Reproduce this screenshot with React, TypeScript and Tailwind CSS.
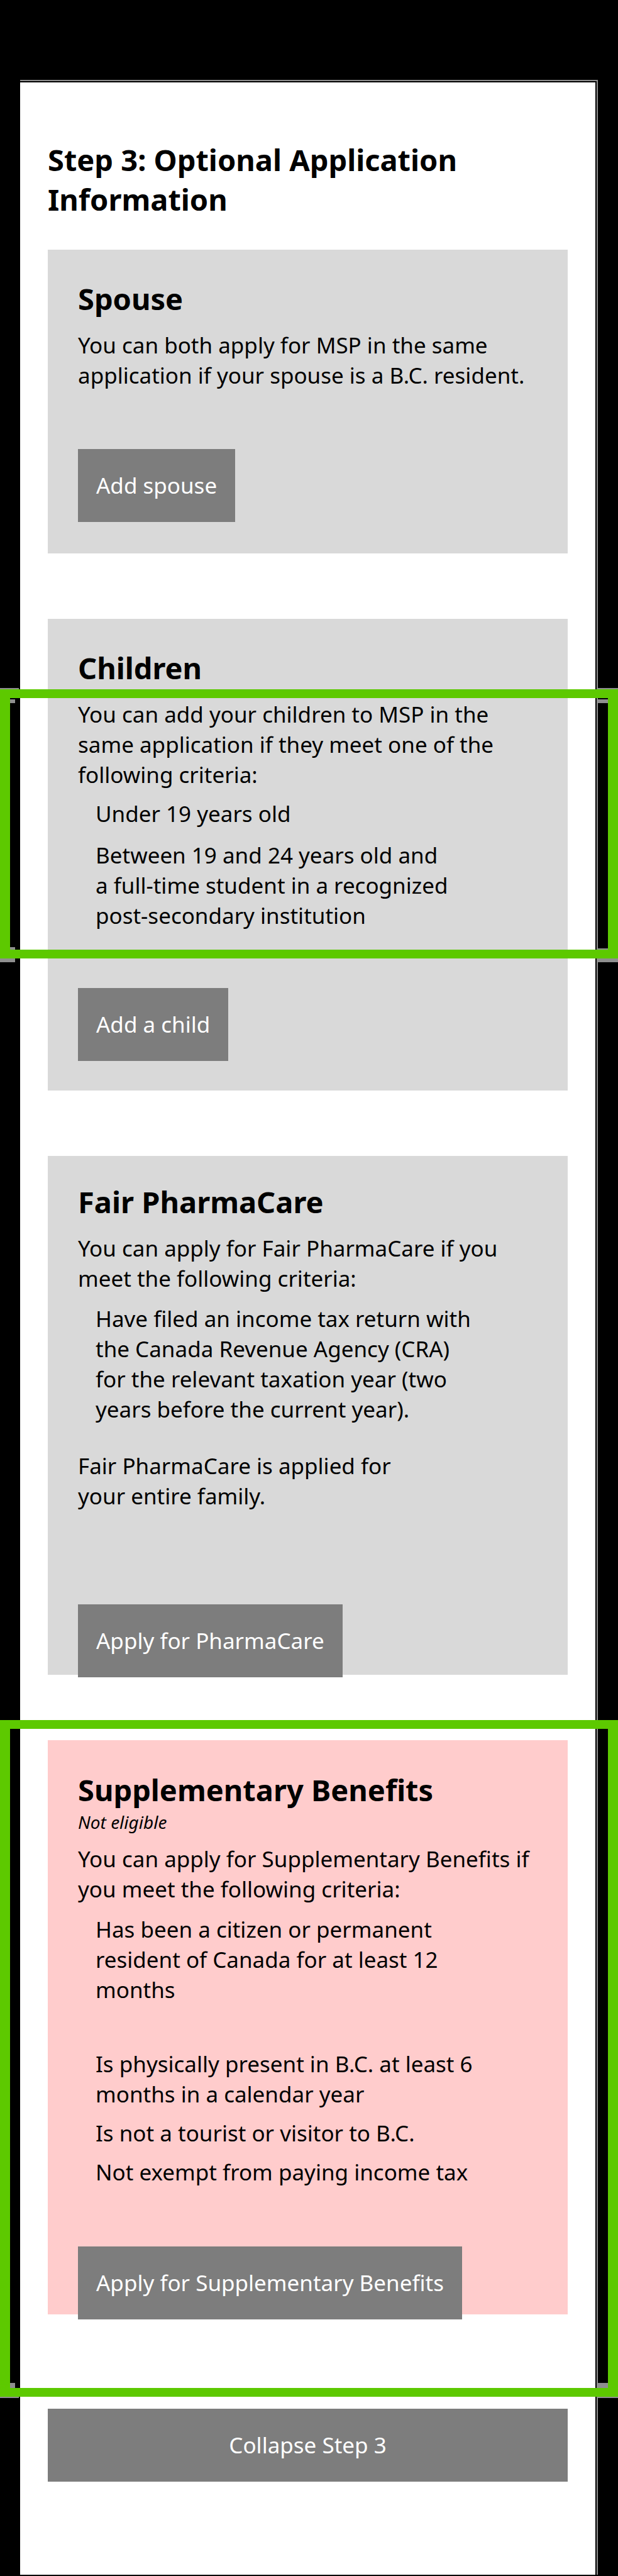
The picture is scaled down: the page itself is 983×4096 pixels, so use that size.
import React from "react";

function Title({ children }: { children: React.ReactNode }) {
  return <h2 className="text-[47px] leading-[63px] font-bold">{children}</h2>;
}

function Action({ children, className = "" }: { children: React.ReactNode; className?: string }) {
  return (
    <button type="button" className={`h-[116px] shrink-0 self-start bg-[#7d7d7d] px-[29px] text-white ${className}`}>
      {children}
    </button>
  );
}

function Highlight({ className = "", children }: { className?: string; children?: React.ReactNode }) {
  return (
    <div
      aria-hidden="true"
      className={`pointer-events-none absolute -left-[76px] -right-[80px] border-x-[16px] border-y-[14px] border-[#5dc900] ${className}`}
    >
      {children}
    </div>
  );
}

export default function App() {
  return (
    <div className="bg-black pt-[127px] pr-8 pb-[2px] pl-8 font-['Noto_Sans',sans-serif] text-[35px] leading-[48px] text-black">
      <div className="border-t-2 border-r-2 border-[#8f8f8f]">
        <div className="bg-black pt-[2px] pr-[2px]">
          <main className="flex flex-col bg-white pt-[92px] pr-11 pb-[148px] pl-11">
            <h1 className="max-w-[740px] text-[47px] leading-[63px] font-bold">
              Step 3: Optional Application Information
            </h1>

            <section className="mt-12 flex flex-col bg-[#d9d9d9] pt-[47px] pb-[50px] pl-12">
              <Title>Spouse</Title>
              <p className="mt-[18px] max-w-[740px]">
                You can both apply for MSP in the same application if your spouse is a B.C. resident.
              </p>
              <Action className="mt-[93px]">Add spouse</Action>
            </section>

            <section className="relative mt-[104px] flex flex-col bg-[#d9d9d9] pt-[47px] pb-[47px] pl-12">
              <Highlight className="top-[112px] h-[428px]">
                <span className="absolute -top-4 -left-4 h-[2px] w-[30px] bg-[#8f8f8f]" />
                <span className="absolute -top-4 -right-4 h-[2px] w-8 bg-[#8f8f8f]" />
                <span className="absolute top-[2px] left-0 h-[6px] w-2 bg-[#8f8f8f]" />
                <span className="absolute top-[2px] right-0 h-[6px] w-4 bg-[#8f8f8f]" />
                <span className="absolute bottom-0 left-0 h-1 w-2 bg-[#8f8f8f]" />
                <span className="absolute right-0 bottom-0 h-[2px] w-4 bg-[#8f8f8f]" />
                <span className="absolute -bottom-5 -left-4 h-[6px] w-6 bg-[#8f8f8f]" />
                <span className="absolute -right-4 -bottom-5 h-[6px] w-8 bg-[#8f8f8f]" />
              </Highlight>
              <Title>Children</Title>
              <p className="mt-[18px] max-w-[740px]">
                You can add your children to MSP in the same application if they meet one of the following criteria:
              </p>
              <ul className="mt-[14px] flex max-w-[593px] flex-col gap-[18px] pl-7">
                <li>Under 19 years old</li>
                <li>Between 19 and 24 years old and a full-time student in a recognized post-secondary institution</li>
              </ul>
              <Action className="mt-[91px]">Add a child</Action>
            </section>

            <section className="mt-[104px] flex flex-col bg-[#d9d9d9] pt-[42px] pl-12">
              <Title>Fair PharmaCare</Title>
              <p className="mt-[18px] max-w-[740px]">
                You can apply for Fair PharmaCare if you meet the following criteria:
              </p>
              <ul className="mt-4 max-w-[640px] pl-7">
                <li>
                  Have filed an income tax return with the Canada Revenue Agency (CRA) for the relevant taxation year
                  (two years before the current year).
                </li>
              </ul>
              <p className="mt-[42px] max-w-[540px]">Fair PharmaCare is applied for your entire family.</p>
              <Action className="mt-[148px] -mb-1">Apply for PharmaCare</Action>
            </section>

            <section className="relative mt-[104px] flex flex-col bg-[#ffcccc] pt-12 pl-12">
              <Highlight className="-top-8 h-[1076px]">
                <span className="absolute bottom-0 left-0 h-2 w-2 bg-[#8f8f8f]" />
                <span className="absolute right-0 bottom-0 h-2 w-4 bg-[#8f8f8f]" />
                <span className="absolute -bottom-4 -left-4 h-[2px] w-[30px] bg-[#8f8f8f]" />
                <span className="absolute -right-4 -bottom-4 h-[2px] w-8 bg-[#8f8f8f]" />
              </Highlight>
              <Title>Supplementary Benefits</Title>
              <p className="text-[28px] leading-[38px] italic">Not eligible</p>
              <p className="mt-4 max-w-[740px]">
                You can apply for Supplementary Benefits if you meet the following criteria:
              </p>
              <ul className="mt-4 flex max-w-[640px] flex-col gap-[14px] pl-7">
                <li className="mb-14">
                  Has been a citizen or permanent resident of Canada for at least 12 months
                </li>
                <li>Is physically present in B.C. at least 6 months in a calendar year</li>
                <li>Is not a tourist or visitor to B.C.</li>
                <li>Not exempt from paying income tax</li>
              </ul>
              <Action className="mt-[94px] -mb-2">Apply for Supplementary Benefits</Action>
            </section>

            <button type="button" className="mt-[150px] h-[116px] bg-[#7d7d7d] text-white">
              Collapse Step 3
            </button>
          </main>
        </div>
      </div>
    </div>
  );
}
